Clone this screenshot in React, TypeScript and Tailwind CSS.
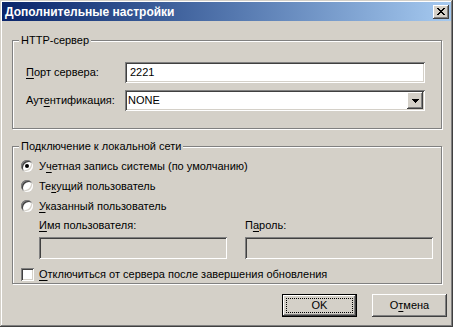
import React from 'react';

// ─── Win2000 bevels ───────────────────────────────────────────────────────────
const raised =
  'shadow-[inset_-1px_-1px_0_#404040,inset_1px_1px_0_#ffffff,inset_-2px_-2px_0_#808080,inset_2px_2px_0_#d4d0c8]';
const sunken =
  'shadow-[inset_1px_1px_0_#808080,inset_-1px_-1px_0_#ffffff,inset_2px_2px_0_#404040,inset_-2px_-2px_0_#d4d0c8]';

const GroupBox = ({
  title,
  className,
  children,
}: {
  title: string;
  className: string;
  children: React.ReactNode;
}) => (
  <div
    className={`relative border border-[#808080] shadow-[inset_1px_1px_0_#ffffff,1px_1px_0_#ffffff] ${className}`}
  >
    <span className="absolute left-[6px] top-[-7px] px-[2px] bg-[#d4d0c8] leading-[13px]">{title}</span>
    {children}
  </div>
);

const Radio = ({ checked }: { checked?: boolean }) => (
  <span
    className={`w-[12px] h-[12px] rounded-full bg-white flex items-center justify-center shrink-0 ${sunken}`}
  >
    {checked && <span className="w-[4px] h-[4px] rounded-full bg-black" />}
  </span>
);

const U = ({ children }: { children: React.ReactNode }) => (
  <span className="underline underline-offset-[2px]">{children}</span>
);

export default function App() {
  return (
    <div
      className={`w-[453px] h-[327px] bg-[#d4d0c8] p-[2px] flex flex-col text-[11px] text-black font-['Liberation_Sans',Arial,sans-serif] shadow-[inset_-1px_-1px_0_#404040,inset_1px_1px_0_#d4d0c8,inset_-2px_-2px_0_#808080,inset_2px_2px_0_#ffffff]`}
    >
      {/* title bar */}
      <div className="h-[19px] flex items-center justify-between pl-[3px] pr-[2px] bg-linear-to-r from-[#0a246a] to-[#a6caf0]">
        <span className="text-white font-bold text-[12px] leading-none">Дополнительные настройки</span>
        <div className={`w-[16px] h-[14px] bg-[#d4d0c8] flex items-center justify-center ${raised}`}>
          <svg width="8" height="7" viewBox="0 0 8 7" shapeRendering="crispEdges">
            <path d="M0 0h2v1h-2zM6 0h2v1h-2zM1 1h2v1h-2zM5 1h2v1h-2zM2 2h4v1h-4zM3 3h2v1h-2zM2 4h4v1h-4zM1 5h2v1h-2zM5 5h2v1h-2zM0 6h2v1h-2zM6 6h2v1h-2z" fill="#000" />
          </svg>
        </div>
      </div>

      {/* HTTP-сервер */}
      <GroupBox title="HTTP-сервер" className="ml-[10px] mr-[9px] mt-[19px] h-[89px]">
        <div className="pt-[21px] pl-[13px] flex flex-col gap-[7px]">
          <div className="flex items-center">
            <span className="w-[99px]">
              <U>П</U>орт сервера:
            </span>
            <div className={`w-[300px] h-[21px] bg-white flex items-center pl-[5px] ${sunken}`}>2221</div>
          </div>
          <div className="flex items-center">
            <span className="w-[99px]">
              Аут<U>е</U>нтификация:
            </span>
            <div className={`w-[300px] h-[21px] bg-white flex items-center justify-between pl-[3px] pr-[2px] ${sunken}`}>
              <span>NONE</span>
              <div className={`w-[16px] h-[17px] bg-[#d4d0c8] flex items-center justify-center ${raised}`}>
                <svg width="7" height="4" viewBox="0 0 7 4" shapeRendering="crispEdges">
                  <path d="M0 0h7v1h-7zM1 1h5v1h-5zM2 2h3v1h-3zM3 3h1v1h-1z" fill="#000" />
                </svg>
              </div>
            </div>
          </div>
        </div>
      </GroupBox>

      {/* Подключение к локальной сети */}
      <GroupBox title="Подключение к локальной сети" className="ml-[10px] mr-[9px] mt-[17px] h-[138px]">
        <div className="pt-[9px] flex flex-col">
          <div className="h-[20px] flex items-center pl-[8px] gap-[6px]">
            <Radio checked />
            <span>
              У<U>ч</U>етная запись системы (по умолчанию)
            </span>
          </div>
          <div className="h-[20px] flex items-center pl-[8px] gap-[6px]">
            <Radio />
            <span>
              Те<U>к</U>ущий пользователь
            </span>
          </div>
          <div className="h-[20px] flex items-center pl-[8px] gap-[6px]">
            <Radio />
            <span>
              <U>У</U>казанный пользователь
            </span>
          </div>
          <div className="h-[18px] flex items-center pl-[26px] gap-[18px]">
            <span className="w-[188px]">
              <U>И</U>мя пользователя:
            </span>
            <span>
              П<U>а</U>роль:
            </span>
          </div>
          <div className="mt-[3px] flex pl-[26px] gap-[18px]">
            <div className={`w-[188px] h-[22px] bg-[#d4d0c8] ${sunken}`} />
            <div className={`w-[188px] h-[22px] bg-[#d4d0c8] ${sunken}`} />
          </div>
          <div className="mt-[7px] h-[16px] flex items-center pl-[8px] gap-[5px]">
            <span className={`w-[13px] h-[13px] bg-white shrink-0 ${sunken}`} />
            <span>
              <U>О</U>тключиться от сервера после завершения обновления
            </span>
          </div>
        </div>
      </GroupBox>

      {/* buttons */}
      <div className="mt-[10px] flex justify-end pr-[4px] gap-[15px]">
        <div className="w-[75px] h-[23px] border border-black bg-[#d4d0c8]">
          <div className={`w-full h-full p-[3px] ${raised}`}>
            <div className="w-full h-full border border-dotted border-black flex items-center justify-center">OK</div>
          </div>
        </div>
        <div className={`w-[75px] h-[23px] bg-[#d4d0c8] flex items-center justify-center ${raised}`}>
          <span>
            О<U>т</U>мена
          </span>
        </div>
      </div>
    </div>
  );
}
